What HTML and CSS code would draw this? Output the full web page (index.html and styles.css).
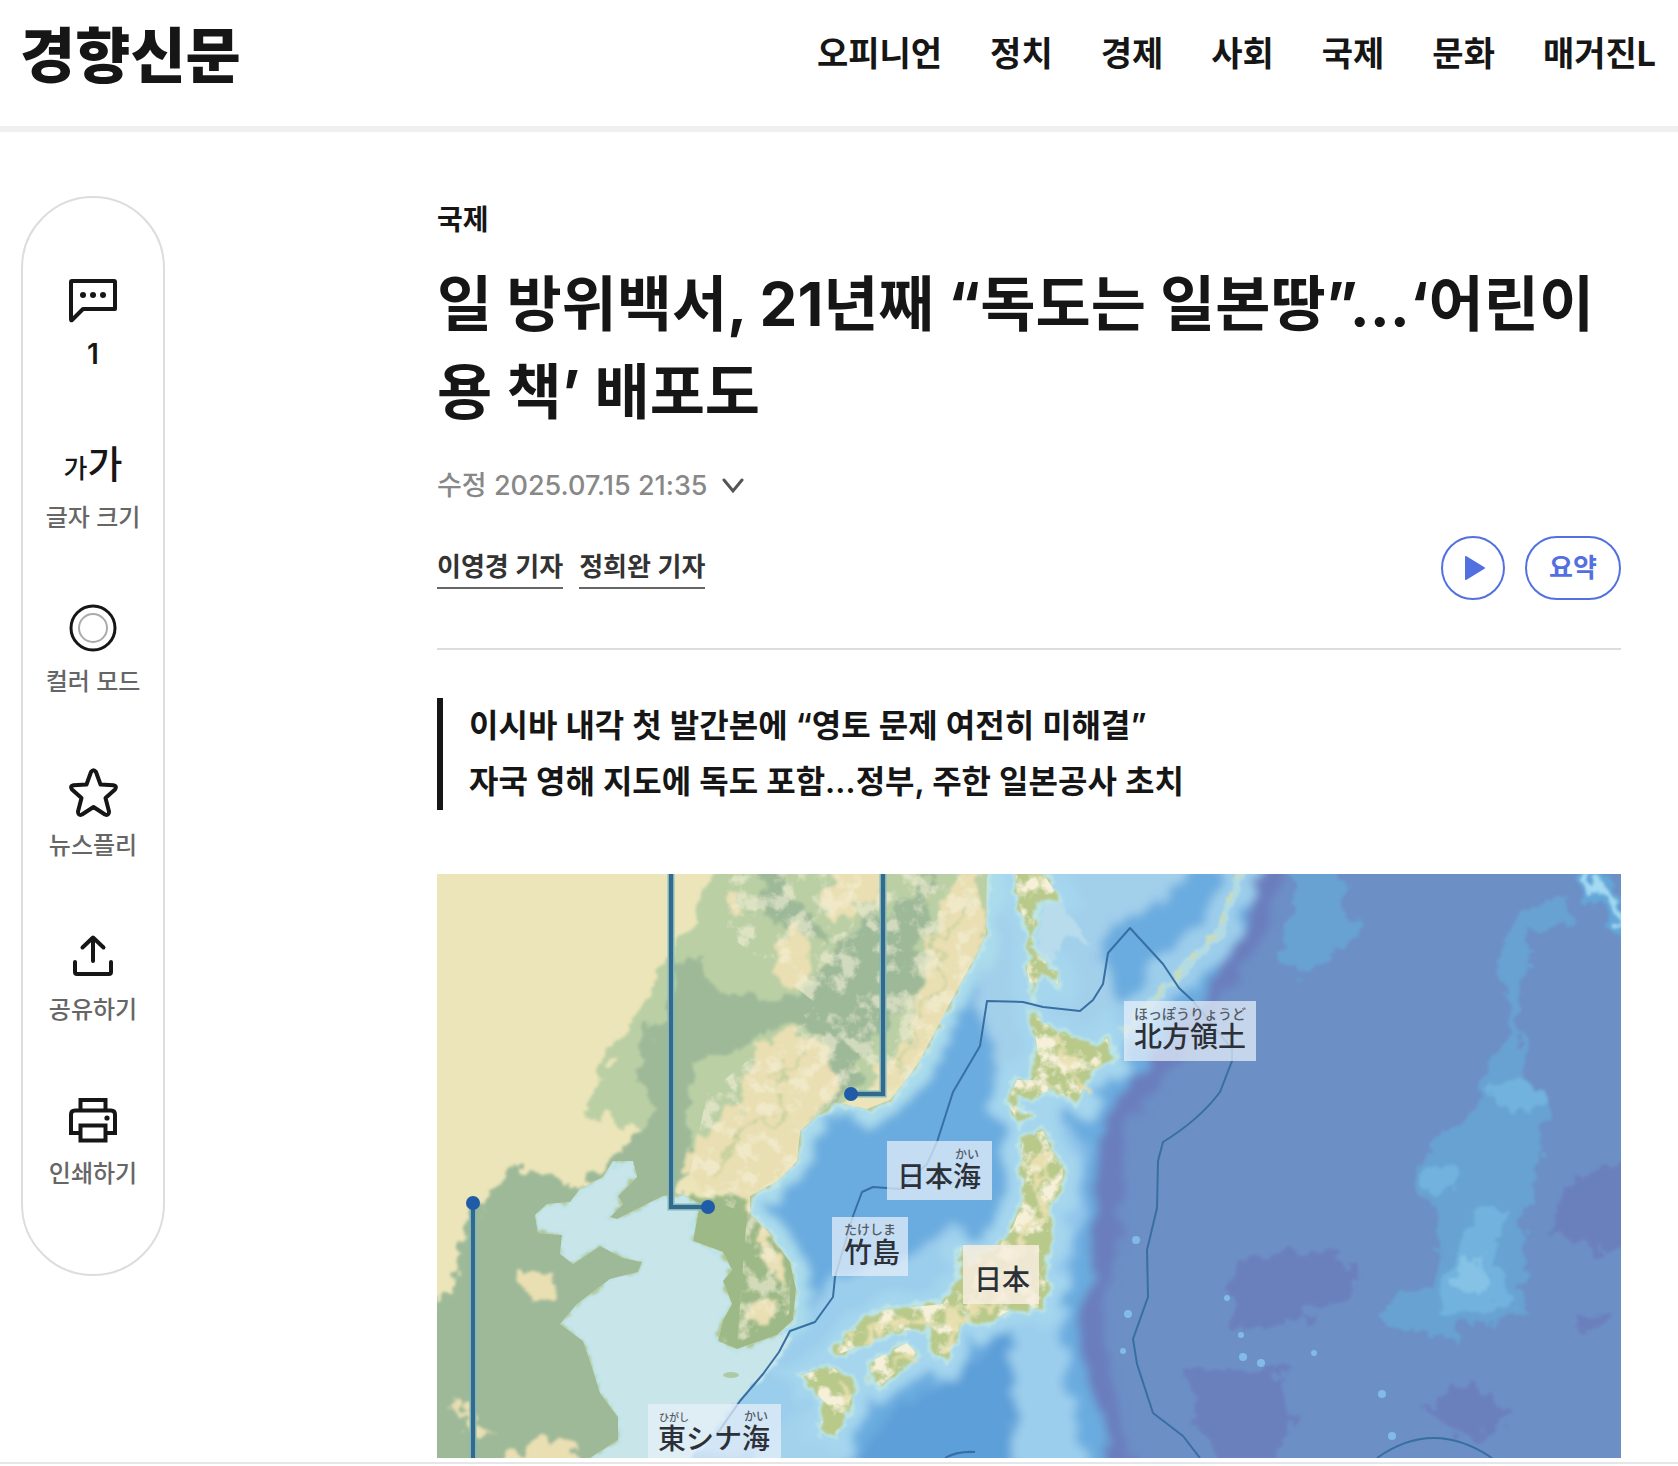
FILE: index.html
```
<!DOCTYPE html>
<html lang="ko">

<head>
    <meta charset="UTF-8">
    <meta name="viewport" content="width=device-width, initial-scale=1.0">
    <title>일 방위백서, 21년째 “독도는 일본땅” | 경향신문</title>
    <link rel="stylesheet" href="styles.css">
</head>

<body>
    <header class="header">
        <a href="#" class="logo">경향신문</a>
        <nav class="gnb">
            <a href="#">오피니언</a>
            <a href="#">정치</a>
            <a href="#">경제</a>
            <a href="#">사회</a>
            <a href="#">국제</a>
            <a href="#">문화</a>
            <a href="#">매거진L</a>
        </nav>
    </header>

    <main class="wrap">
        <aside class="tools">
            <button type="button" class="tool">
                <svg class="icon" viewBox="0 0 56 56">
                    <path d="M7 9H49Q50 9 50 10V37H18L7 48Q6 49 6 47V10Q6 9 7 9Z" />
                    <circle class="dot" cx="18" cy="23" r="3" />
                    <circle class="dot" cx="28" cy="23" r="3" />
                    <circle class="dot" cx="38" cy="23" r="3" />
                </svg>
                <span class="count">1</span>
            </button>
            <button type="button" class="tool">
                <span class="icon font-icon"><small>가</small><b>가</b></span>
                <span class="label">글자 크기</span>
            </button>
            <button type="button" class="tool">
                <svg class="icon" viewBox="0 0 56 56">
                    <circle cx="28" cy="28" r="22" stroke-width="3" />
                    <circle class="inner" cx="28" cy="28" r="14" />
                </svg>
                <span class="label">컬러 모드</span>
            </button>
            <button type="button" class="tool">
                <svg class="icon" viewBox="0 0 56 56">
                    <path d="M26 8Q28.500 4.500 31 8L35.500 20.500L48.500 21.200Q52.500 22 50 25.500L40.500 34L44 47.500Q44 52 40 50.500L28.500 43L17 50.500Q13 52 13 47.500L16.500 34L7 25.500Q4.500 22 8.500 21.200L21.500 20.500Z" />
                </svg>
                <span class="label">뉴스플리</span>
            </button>
            <button type="button" class="tool">
                <svg class="icon" viewBox="0 0 56 56">
                    <path d="M28 33V10M17.500 19.500L28 9.500L38.500 19.500M10 34V44Q10 46 12 46H44Q46 46 46 44V34" />
                </svg>
                <span class="label">공유하기</span>
            </button>
            <button type="button" class="tool">
                <svg class="icon" viewBox="0 0 56 56">
                    <g stroke-linejoin="miter" stroke-linecap="butt">
                        <path d="M15.500 18.500V8H40.500V18.500" />
                        <path d="M15.500 41H6V22.500Q6 18.500 10 18.500H46Q50 18.500 50 22.500V41H40.500" />
                        <path d="M15.500 33.500H40.500V48.500H15.500Z" />
                    </g>
                    <circle class="dot" cx="42" cy="26" r="2.600" />
                </svg>
                <span class="label">인쇄하기</span>
            </button>
        </aside>

        <article class="article">
            <a href="#" class="category">국제</a>
            <h1>일 방위백서, 21년째 “독도는 일본땅”…‘어린이용 책’ 배포도</h1>
            <button type="button" class="date">
                수정 2025.07.15 21:35
                <svg width="22" height="16" viewBox="0 0 22 16">
                    <path d="M2 2L11 13L20 2" />
                </svg>
            </button>
            <div class="byline">
                <div class="writers">
                    <a href="#">이영경 기자</a>
                    <a href="#">정희완 기자</a>
                </div>
                <div class="actions">
                    <button type="button" class="round" aria-label="기사 듣기">
                        <svg width="22" height="26" viewBox="0 0 22 26">
                            <path d="M2 2L20 13L2 24Z" />
                        </svg>
                    </button>
                    <button type="button" class="round wide">요약</button>
                </div>
            </div>

            <div class="summary">
                <p>이시바 내각 첫 발간본에 “영토 문제 여전히 미해결”</p>
                <p>자국 영해 지도에 독도 포함…정부, 주한 일본공사 초치</p>
            </div>

            <figure class="photo">
                <svg viewBox="0 0 1184 584" role="img" aria-label="일본 방위백서 지도">
                    <defs>
                        <filter id="coast" x="-5%" y="-5%" width="110%" height="110%">
                            <feTurbulence type="fractalNoise" baseFrequency="0.09" numOctaves="3" seed="4" />
                            <feDisplacementMap in="SourceGraphic" scale="12" xChannelSelector="R" yChannelSelector="G" />
                            <feGaussianBlur stdDeviation="0.9" />
                        </filter>
                        <filter id="relief" x="-10%" y="-10%" width="120%" height="120%">
                            <feTurbulence type="fractalNoise" baseFrequency="0.05" numOctaves="4" seed="9" />
                            <feDisplacementMap in="SourceGraphic" scale="32" xChannelSelector="R" yChannelSelector="G" />
                            <feGaussianBlur stdDeviation="1.8" />
                        </filter>
                        <filter id="soft" x="-20%" y="-20%" width="140%" height="140%">
                            <feTurbulence type="fractalNoise" baseFrequency="0.04" numOctaves="3" seed="2" />
                            <feDisplacementMap in="SourceGraphic" scale="30" xChannelSelector="R" yChannelSelector="G" />
                            <feGaussianBlur stdDeviation="5" />
                        </filter>
                        <!-- 산지 얼룩 -->
                        <filter id="hills" x="0" y="0" width="100%" height="100%">
                            <feTurbulence type="fractalNoise" baseFrequency="0.05" numOctaves="4" seed="21" />
                            <feColorMatrix values="0 0 0 0 0.92  0 0 0 0 0.87  0 0 0 0 0.69  5 0 0 0 -2.4" />
                            <feComposite in2="SourceGraphic" operator="in" />
                        </filter>
                        <path id="mainland" d="M-20 -20H550V0L549 59L540 79L523 110L503 148L480 191L453 226L430 235L398 228L380 241L363 257L360 287L340 307L313 322V340L330 357L353 388L359 415L356 446L340 461L300 475L281 467L286 446L295 430L286 407L295 396L286 378L256 367L260 345L263 330L246 320L226 322L206 332L180 345L173 343L186 330L181 322L200 303L196 287H176L166 303L143 315L133 328L110 330L98 341L101 359L125 361L123 380L136 390L163 372L186 384L205 388L201 398L173 405L140 430L123 450L146 467L156 496L163 519L181 543V566L153 584V604H-20Z" />
                        <path id="islands" d="M578 -10H600L623 25L600 28L595 75L620 98L621 110L603 98L596 121L590 98L593 63L580 25Z
                            M595 139L620 158L660 172L670 164L678 185L653 199L640 228L613 216L593 226L581 220L580 233L595 241L583 251L570 228L580 206L596 206L600 172Z
                            M586 262L606 257L613 274L626 295L625 315L611 334L615 369L606 396L613 411L603 434L573 436L550 450L526 442L520 465L508 488L493 477L496 454L470 456L440 465L400 481L396 477L426 446L446 436L506 430L523 403V373L530 392L560 373L576 353L586 326L583 287Z
                            M433 488L470 469L481 481L466 492L443 512L435 508Z
                            M363 502L393 492L418 508L410 539L400 562L383 558L386 527Z" />
                        <clipPath id="land">
                            <use href="#mainland" />
                        </clipPath>
                    </defs>

                    <!-- 태평양 -->
                    <rect width="1184" height="584" fill="#6c8fc6" />
                    <g filter="url(#relief)">
                        <g fill="#6b80bd">
                            <path d="M806 382L900 376L928 408L866 446L796 452L790 415Z" />
                            <path d="M752 490L846 500L858 546L826 604H790L760 544Z" />
                            <path d="M1204 287L1136 303L1117 334L1122 365L1160 384L1204 365Z" />
                            <path d="M1020 508L1074 535L1040 572L990 542Z" />
                            <path d="M1140 440L1166 442L1160 456L1136 454Z" />
                        </g>
                        <path fill="#67a2d2" d="M853 -20H893L924 62L888 82L850 100L840 78L854 40Z" />
                        <path fill="#67a2d2" d="M1100 26L1132 28L1130 52L1097 58L1084 124L1080 156L1087 191L1110 237L1100 291L1087 357L1082 411L1090 438L1050 454L1024 452L1017 469L984 458L939 444L960 419L1000 411V338L980 322L979 288L1007 261L1047 226L1050 187L1074 160L1060 94L1077 48Z" />
                        <g fill="#71b2de">
                            <ellipse cx="1004" cy="303" rx="19" ry="22" />
                            <ellipse cx="1080" cy="222" rx="26" ry="15" />
                            <path d="M1037 334L1074 334L1056 376L1077 431L1004 440L1000 427L1024 376Z" />
                        </g>
                        <ellipse cx="1037" cy="402" rx="16" ry="17" fill="#86c2e5" />
                        <path d="M1150 -10L1170 28L1194 60" fill="none" stroke="#63a6d8" stroke-width="22" />
                        <path d="M1150 -6L1168 24L1190 50" fill="none" stroke="#a4daf2" stroke-width="8" />
                    </g>
                    <g fill="#82bbe8">
                        <circle cx="804" cy="461" r="3" />
                        <circle cx="806" cy="483" r="4" />
                        <circle cx="824" cy="489" r="4" />
                        <circle cx="877" cy="479" r="3" />
                        <circle cx="945" cy="520" r="4" />
                        <circle cx="955" cy="562" r="4" />
                        <circle cx="790" cy="424" r="3" />
                        <circle cx="699" cy="366" r="4" />
                        <circle cx="691" cy="440" r="4" />
                        <circle cx="686" cy="477" r="3" />
                    </g>

                    <!-- 동해와 해구 -->
                    <g filter="url(#soft)">
                        <path fill="#6aacdf" stroke="#6a7dbd" stroke-width="22" d="M-40 -40H842L826 40L801 85L765 135L714 200L672 262L674 315L664 403L650 438L662 500L696 624H-40Z" />
                        <path fill="#6aacdf" d="M-40 -40H834L806 50L785 76L745 127L697 195L654 257V315L640 403L620 440L634 500L662 624H-40Z" />
                        <path fill="#a2cfea" d="M555 -20H770L722 28L676 50L664 84L690 130L690 165L560 200L540 130Z" />
                        <path fill="#9bcdec" d="M568 420L625 436L628 500L650 600H568L580 500Z" />
                        <path fill="#9bcdec" d="M398 400L470 385L520 350L540 400L500 430L400 470L330 580H240V470L350 470Z" />
                        <path fill="#a3d2ec" d="M300 604L360 530L420 580L400 604Z" />
                        <path fill="#93c6eb" d="M620 240L650 270L640 380L620 430L600 300Z" />
                        <path fill="none" stroke="#9ccdeb" stroke-width="36" d="M810 -10L780 60L740 96L684 156" />
                        <use href="#islands" fill="none" stroke="#a5d6ee" stroke-width="32" />
                        <use href="#mainland" fill="none" stroke="#aadcec" stroke-width="30" />
                        <path fill="#5d9fd8" d="M566 464L576 490L574 604H410L450 544L510 506Z" />
                    </g>
                    <g filter="url(#coast)">
                        <path fill="#c8e5ea" d="M90 260H270L300 400L290 470L356 462L340 490L290 540L240 604H120V400L90 380Z" />
                        <path fill="#b8dcec" d="M605 28L622 26L655 70L630 64L612 92L600 78Z" />
                        <use href="#mainland" fill="none" stroke="#bfe4e8" stroke-width="7" />
                        <use href="#islands" fill="none" stroke="#bce4e6" stroke-width="7" />
                        <path fill="none" stroke="#b2dbe4" stroke-width="9" d="M806 -5L782 60L750 92L684 160" />
                        <path fill="none" stroke="#c9dcb8" stroke-width="4" stroke-dasharray="12 12" d="M804 -5L780 60L748 92L684 160" />
                    </g>

                    <!-- 육지 -->
                    <g filter="url(#coast)">
                        <use href="#mainland" fill="#b4c795" />
                        <use href="#islands" fill="#b8c98a" />
                    </g>
                    <g clip-path="url(#land)">
                        <rect width="560" height="584" fill="#ece5b9" />
                        <g filter="url(#relief)">
                            <path fill="#bacfa4" d="M282 -20L252 55L226 86L206 129L189 160L159 202L150 240L206 257L260 300L400 240L480 170L560 60V-20Z" />
                            <path fill="#9db998" d="M260 83L288 121L317 121L364 125L397 75L440 40L480 21L500 -10L490 36L480 117L447 152L424 191L402 236L390 164L344 152L310 172L257 191L250 230L260 300L210 345H160L157 300L197 261L220 230L197 195L210 160L230 145L237 94Z" />
                            <path fill="#9db998" d="M325 -10L345 -10L342 20L375 40L390 66L350 54L322 42Z" />
                            <path fill="#9db998" d="M-20 425L14 419L27 357L50 319L74 295L94 295L130 307L230 350V604H-20Z" />
                            <path fill="#9db987" d="M240 325L300 322L330 350L370 400L368 465L290 490L240 380Z" />
                            <g fill="#e9dfb2">
                                <path d="M510 20L540 -10L550 63L509 145L482 187L452 222L429 206L459 183L482 125L496 67Z" />
                                <path d="M392 176L402 214L369 253L362 291L319 319H299L246 303L259 264L299 237L316 176L349 156Z" />
                                <path d="M345 70L365 50L368 110L348 120L335 100Z" />
                                <path d="M290 20L300 15L304 50L294 44Z" />
                                <path d="M395 -5L450 -10L440 26L400 50L382 46Z" />
                                <path d="M300 312L322 330L340 380L352 410L334 396L318 350Z" />
                                <path d="M320 425L340 430L332 450L312 444Z" />
                                <path d="M80 396L110 396L122 418L96 432Z" />
                                <path d="M14 530L44 545L60 560L40 566Z" />
                                <path d="M70 584L110 560L140 574L130 600H70Z" />
                            </g>
                            <g fill="none" stroke="#c4cf9c" stroke-width="3">
                                <path d="M530 30L500 70L505 110L480 150L462 200" />
                                <path d="M372 180L340 200L350 240L300 260L280 300" />
                            </g>
                        </g>
                        <path filter="url(#hills)" opacity="0.6" d="M290 0H545V70L470 220L400 225L360 290L352 440L300 470L310 340L250 315L270 220L380 130L290 60Z" />
                    </g>
                    <use href="#islands" filter="url(#hills)" />
                    <g fill="none" stroke="#e8dfae" stroke-width="5" stroke-linecap="round" stroke-linejoin="round" filter="url(#relief)">
                        <path d="M620 168L628 192L648 190M628 196L646 214" />
                        <path d="M606 274L600 310L606 340L586 366L570 400L550 436L520 440L512 470" />
                        <path d="M500 444L450 452L420 466M450 496L474 482M398 510L410 530" />
                    </g>
                    <ellipse cx="294" cy="501" rx="8" ry="3" fill="#aec9a5" />

                    <!-- 경계선 -->
                    <g fill="none" stroke="#386fa3" stroke-width="2" stroke-linejoin="round">
                        <path d="M280 560L303 527L326 500L342 478L353 457L378 448L396 423L398 403L416 342L425 318L436 313L463 315L490 290L500 268L516 218L543 172L550 127L586 128L606 133L643 137L656 126L666 110L671 79L693 54L726 90L742 114L756 127L795 175L795 187L783 218Q762 246 726 268L721 287L720 334L710 376L711 423L696 465L700 490L716 539L746 562L763 584" />
                        <path d="M940 584Q996 544 1055 584" />
                        <path d="M508 584Q520 577 538 578" />
                    </g>

                    <!-- 지시선 -->
                    <g class="leader-glow">
                        <path d="M234 0V333H271" />
                        <path d="M446 0V220H414" />
                        <path d="M36 329V584" />
                    </g>
                    <g class="leader">
                        <path d="M234 0V333H271" />
                        <path d="M446 0V220H414" />
                        <path d="M36 329V584" />
                    </g>
                    <g fill="#1f5ba6">
                        <circle cx="271" cy="333" r="7" />
                        <circle cx="414" cy="220" r="7" />
                        <circle cx="36" cy="329" r="7" />
                    </g>

                    <g class="place">
                        <rect x="687" y="127" width="132" height="60" />
                        <text x="697" y="173">北方領土</text>
                        <text class="ruby" x="697" y="145" font-size="14">ほっぽうりょうど</text>
                        <rect x="450" y="267" width="105" height="59" />
                        <text x="460" y="313">日本海</text>
                        <text class="ruby" x="518" y="285" font-size="12">かい</text>
                        <rect x="395" y="343" width="76" height="59" />
                        <text x="407" y="389">竹島</text>
                        <text class="ruby" x="407" y="360" font-size="13">たけしま</text>
                        <rect class="warm" x="526" y="371" width="76" height="59" />
                        <text x="537" y="416">日本</text>
                        <rect x="211" y="530" width="133" height="54" />
                        <text x="221" y="575">東シナ海</text>
                        <text class="ruby" x="222" y="547" font-size="10">ひがし</text>
                        <text class="ruby" x="307" y="547" font-size="12">かい</text>
                    </g>
                </svg>
            </figure>
        </article>
    </main>

    <footer class="bottom-bar"></footer>
</body>

</html>
```
FILE: styles.css
```
* {
    margin: 0;
    padding: 0;
    box-sizing: border-box;
}

body {
    background: #fff;
    color: #161616;
    font-family: Inter, "Noto Sans CJK KR", sans-serif;
    overflow-x: hidden;
}

a {
    color: inherit;
    text-decoration: none;
}

button {
    border: none;
    background: none;
    color: inherit;
    font-family: inherit;
    cursor: pointer;
}

.header {
    display: flex;
    justify-content: space-between;
    align-items: flex-start;
    height: 132px;
    padding: 20px 22px 0 20px;
    border-bottom: 6px solid #f0f0f0;
}

.logo {
    font-family: "Noto Sans CJK KR", sans-serif;
    font-size: 60px;
    font-weight: 900;
    line-height: 64px;
}

.gnb {
    display: flex;
    gap: 48px;
    font-size: 34px;
    font-weight: 700;
    line-height: 68px;
    white-space: nowrap;
}

.wrap {
    display: grid;
    grid-template-columns: 144px minmax(0, 1fr);
    column-gap: 272px;
    align-items: start;
    padding: 64px 57px 0 21px;
}

.tools {
    display: flex;
    flex-direction: column;
    padding: 46px 0;
    border: 2px solid #ddd;
    border-radius: 72px;
}

.tool {
    display: flex;
    flex-direction: column;
    align-items: center;
    justify-content: center;
    height: 164px;
}

.icon {
    width: 56px;
    height: 56px;
    fill: none;
    stroke: #161616;
    stroke-width: 4;
    stroke-linecap: round;
    stroke-linejoin: round;
}

.icon .dot {
    fill: #161616;
    stroke: none;
}

.icon .inner {
    stroke: #aaa;
    stroke-width: 2;
}

.font-icon {
    display: flex;
    align-items: baseline;
    justify-content: center;
    line-height: 56px;
}

.font-icon small {
    font-size: 26px;
    font-weight: 500;
}

.font-icon b {
    font-size: 38px;
    font-weight: 500;
}

.label,
.count {
    color: #666;
    font-size: 24px;
    font-weight: 500;
    line-height: 52px;
    white-space: nowrap;
}

.count {
    color: #161616;
    font-size: 28px;
    font-weight: 600;
}

.article {
    display: flex;
    flex-direction: column;
    align-items: stretch;
    padding-top: 4px;
}

.category {
    font-size: 28px;
    font-weight: 600;
    line-height: 40px;
}

.article h1 {
    margin-top: 20px;
    font-size: 60px;
    font-weight: 700;
    line-height: 88px;
}

.date {
    display: flex;
    align-items: center;
    align-self: flex-start;
    gap: 14px;
    margin-top: 30px;
    color: #888;
    font-size: 27px;
    font-weight: 500;
    line-height: 40px;
}

.date svg {
    fill: none;
    stroke: #555;
    stroke-width: 3;
    stroke-linecap: round;
}

.byline {
    display: flex;
    justify-content: space-between;
    align-items: center;
    margin-top: 30px;
    padding-bottom: 48px;
    border-bottom: 2px solid #ddd;
}

.writers {
    display: flex;
    gap: 16px;
    color: #333;
    font-size: 26px;
    font-weight: 600;
    line-height: 40px;
}

.writers a {
    border-bottom: 2px solid #666;
}

.actions {
    display: flex;
    gap: 20px;
}

.round {
    display: flex;
    align-items: center;
    justify-content: center;
    width: 64px;
    height: 64px;
    border: 2px solid #5270e0;
    border-radius: 32px;
    color: #5270e0;
    font-size: 26px;
    font-weight: 600;
    line-height: 40px;
}

.round.wide {
    width: 96px;
}

.round svg {
    margin-left: 4px;
    fill: #5270e0;
    stroke: #5270e0;
    stroke-width: 2;
    stroke-linejoin: round;
}

.summary {
    margin-top: 48px;
    padding-left: 26px;
    border-left: 6px solid #161616;
    font-size: 32px;
    font-weight: 600;
    line-height: 56px;
}

.photo {
    margin-top: 64px;
}

.photo svg {
    display: block;
    width: 100%;
}

.leader,
.leader-glow {
    fill: none;
    stroke: #35698c;
    stroke-width: 4;
}

.leader-glow {
    stroke: #7fb9bd;
    stroke-width: 7;
}

.place {
    font-family: "Noto Sans CJK JP", sans-serif;
    font-size: 28px;
    font-weight: 500;
    fill: #2c3038;
}

.place rect {
    fill: rgba(232, 240, 250, 0.72);
}

.place .warm {
    fill: rgba(247, 237, 222, 0.85);
}

.place .ruby {
    fill: #555b66;
}

.bottom-bar {
    height: 4px;
    margin-top: 4px;
    border-top: 2px solid #e6e6e6;
}
```
